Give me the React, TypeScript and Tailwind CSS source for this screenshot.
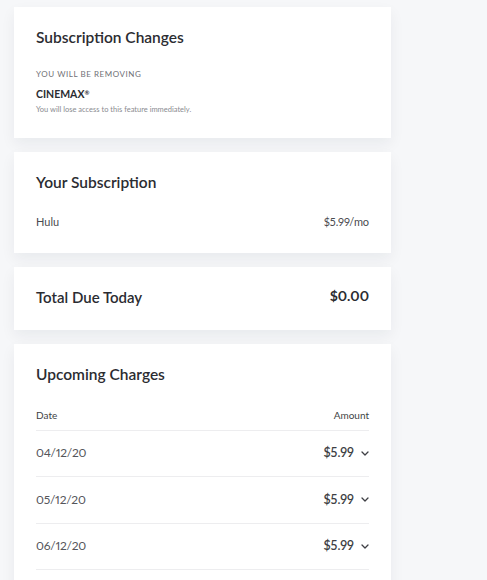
const charges = ["04/12/20", "05/12/20", "06/12/20"];

function Card({ children, className = "" }: { children: React.ReactNode; className?: string }) {
  return (
    <div
      className={`w-[377px] bg-white shadow-[0_6px_14px_rgba(20,30,50,0.06)] px-[22px] ${className}`}
    >
      {children}
    </div>
  );
}

export default function App() {
  return (
    <div
      className="min-h-[580px] bg-[#f6f7f9] pl-[14px] pt-[7px] flex flex-col gap-[14px] text-[#2b2c31] proportional-nums"
      style={{ fontFamily: "Lato, 'Noto Sans', sans-serif" }}
    >
      <Card className="pt-[20px] pb-[23px]">
        <h2 className="text-[15.5px] leading-[20px] font-semibold">Subscription Changes</h2>
        <p className="mt-[21px] text-[8px] leading-[12px] uppercase tracking-[0.07em] text-[#6f7075]">
          You will be removing
        </p>
        <p className="mt-[7px] text-[10.5px] leading-[14px] font-bold">
          CINEMAX<sup className="text-[6px]">®</sup>
        </p>
        <p className="mt-[2.5px] text-[7.5px] leading-[11px] text-[#8a8b90]">
          You will lose access to this feature immediately.
        </p>
      </Card>

      <Card className="pt-[20px] pb-[23px]">
        <h2 className="text-[15.5px] leading-[20px] font-semibold">Your Subscription</h2>
        <div className="mt-[22px] flex items-center justify-between text-[11px] leading-[16px] text-[#4a4b50]">
          <span>Hulu</span>
          <span className="tracking-[-0.01em]">$5.99/mo</span>
        </div>
      </Card>

      <Card className="pt-[20px] pb-[23px] flex items-center justify-between">
        <h2 className="text-[15px] leading-[20px] font-semibold">Total Due Today</h2>
        <span className="text-[14px] leading-[20px] font-bold -mt-[2px]">$0.00</span>
      </Card>

      <Card className="pt-[20px] pb-[20px]">
        <h2 className="text-[15.5px] leading-[20px] font-semibold">Upcoming Charges</h2>
        <div className="mt-[25px] pb-[9px] border-b border-[#ededef] flex justify-between text-[10px] leading-[12px] text-[#3e3f44]">
          <span>Date</span>
          <span>Amount</span>
        </div>
        {charges.map((d) => (
          <div
            key={d}
            className="h-[46.6px] border-b border-[#ededef] flex items-center justify-between"
          >
            <span className="text-[12px] tracking-[-0.02em] text-[#55565b]">{d}</span>
            <span className="flex items-center gap-[7px]">
              <span className="text-[12.5px] font-semibold text-[#3e3f44]">$5.99</span>
              <svg width="8" height="5" viewBox="0 0 8 5" className="text-[#3e3f44]">
                <polyline
                  points="1,1 4,4 7,1"
                  fill="none"
                  stroke="currentColor"
                  strokeWidth="1.3"
                  strokeLinecap="round"
                  strokeLinejoin="round"
                />
              </svg>
            </span>
          </div>
        ))}
      </Card>
    </div>
  );
}
